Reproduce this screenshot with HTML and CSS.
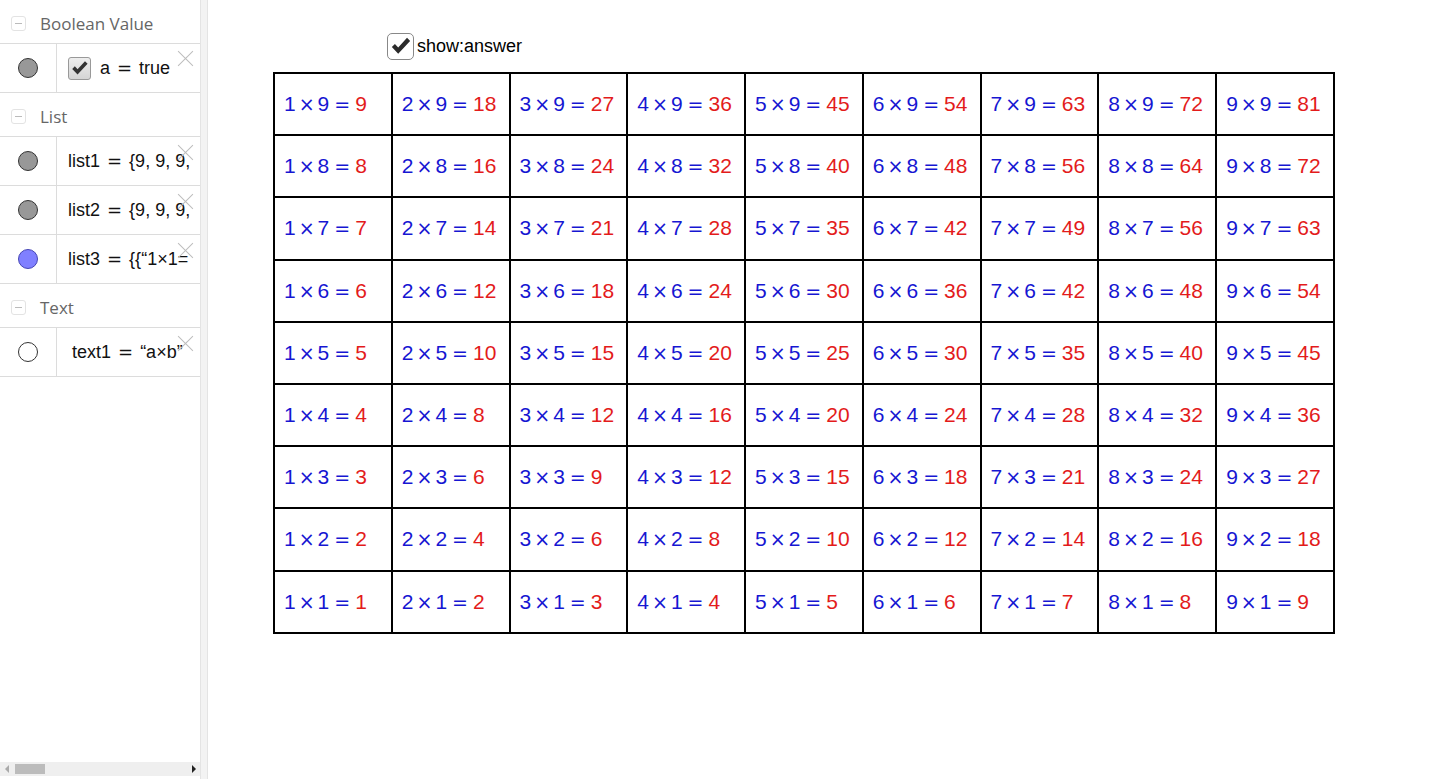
FILE: index.html
```html
<!DOCTYPE html>
<html lang="en">
<head>
  <meta charset="UTF-8">
  <title>Multiplication Table</title>
  <link rel="stylesheet" href="styles.css">
</head>
<body>
  <div id="algebra">
    <div class="group">
      <span class="collapse"></span>
      <span class="group-name">Boolean Value</span>
    </div>
    <div class="item">
      <div class="marble"><span class="dot gray"></span></div>
      <div class="def">
        <span class="check small">
          <svg viewBox="0 0 26 26"><path d="M4 13.5 L7.2 10.3 L10.6 14 L19.8 4 L23 7.2 L10.6 20.5 Z"/></svg>
        </span>
        <span class="math">a <span class="rel">=</span> true</span>
      </div>
      <span class="close"></span>
    </div>
    <div class="group">
      <span class="collapse"></span>
      <span class="group-name">List</span>
    </div>
    <div class="item">
      <div class="marble"><span class="dot gray"></span></div>
      <div class="def"><span class="math">list1 <span class="rel">=</span> {9, 9, 9,</span></div>
      <span class="close top"></span>
    </div>
    <div class="item">
      <div class="marble"><span class="dot gray"></span></div>
      <div class="def"><span class="math">list2 <span class="rel">=</span> {9, 9, 9,</span></div>
      <span class="close top"></span>
    </div>
    <div class="item">
      <div class="marble"><span class="dot blue"></span></div>
      <div class="def"><span class="math">list3 <span class="rel">=</span> {{“1×1=</span></div>
      <span class="close top"></span>
    </div>
    <div class="group">
      <span class="collapse"></span>
      <span class="group-name">Text</span>
    </div>
    <div class="item">
      <div class="marble"><span class="dot white"></span></div>
      <div class="def indent"><span class="math">text1 <span class="rel">=</span> “a×b”</span></div>
      <span class="close top"></span>
    </div>
    <div class="hscroll">
      <span class="arrow left"></span>
      <span class="thumb"></span>
      <span class="arrow right"></span>
    </div>
  </div>
  <div id="splitter"></div>
  <div id="graphics">
    <div class="toggle">
      <span class="check">
        <svg viewBox="0 0 26 26"><path d="M4 13.5 L7.2 10.3 L10.6 14 L19.8 4 L23 7.2 L10.6 20.5 Z"/></svg>
      </span>
      <span>show:answer</span>
    </div>
    <div id="table"></div>
  </div>

  <script>
    let table = document.getElementById('table');
    for (let b = 9; b >= 1; b--) {
      for (let a = 1; a <= 9; a++) {
        let cell = document.createElement('div');
        cell.className = 'cell';
        cell.innerHTML = '<span class="q">' + a + '<span class="op">×</span>' + b +
          '<span class="op eq">=</span></span><span class="ans">' + (a * b) + '</span>';
        table.appendChild(cell);
      }
    }
  </script>
</body>
</html>
```
FILE: styles.css
```css
body {
  margin: 0;
  display: flex;
  height: 100vh;
  overflow: hidden;
  background: #fff;
  font-family: "Open Sans", sans-serif;
}
#algebra {
  position: relative;
  width: 200px;
  flex-shrink: 0;
  overflow: hidden;
}
#splitter {
  width: 6px;
  flex-shrink: 0;
  background: #f3f3f3;
  border-left: 1px solid #e4e4e4;
  border-right: 1px solid #e4e4e4;
}
.group {
  height: 44px;
  box-sizing: border-box;
  padding-top: 3px;
  display: flex;
  align-items: center;
  border-bottom: 1px solid #dcdcdc;
}
.collapse {
  width: 13px;
  height: 13px;
  margin: 0 14px 0 11px;
  border: 1px solid #e3e3e3;
  border-radius: 3px;
  position: relative;
}
.collapse::after {
  content: "";
  position: absolute;
  left: 3px;
  right: 3px;
  top: 6px;
  border-top: 1px solid #bbb;
}
.group-name {
  font-size: 17px;
  color: #666;
}
.item {
  position: relative;
  height: 48px;
  display: flex;
  border-bottom: 1px solid #dcdcdc;
}
.marble {
  width: 56px;
  flex-shrink: 0;
  display: flex;
  align-items: center;
  justify-content: center;
  border-right: 1px solid #dcdcdc;
}
.dot {
  width: 18px;
  height: 18px;
  border-radius: 50%;
  border: 1px solid #333;
}
.dot.gray { background: #989898; }
.dot.blue { background: #8080ff; border-color: #4646b4; }
.dot.white { background: #fff; }
.def {
  display: flex;
  align-items: center;
  padding-left: 11px;
  white-space: nowrap;
}
.def.indent { padding-left: 15px; }
.math {
  font-family: "Liberation Sans", sans-serif;
  font-size: 18px;
  color: #111;
}
.rel {
  margin: 0 2px;
  font-family: "DejaVu Sans", sans-serif;
}
.check {
  width: 27px;
  height: 27px;
  display: inline-flex;
  box-sizing: border-box;
  border: 1px solid #888;
  border-radius: 5px;
  background: #fff;
}
.check svg {
  width: 100%;
  height: 100%;
  fill: #2b2b2b;
}
.check.small {
  width: 23px;
  height: 23px;
  margin-right: 9px;
  border-radius: 3px;
  background: linear-gradient(#eee, #d4d4d4);
  border-color: #999;
}
.check.small svg { fill: #333; }
.close {
  position: absolute;
  right: 6px;
  top: 6px;
  width: 17px;
  height: 17px;
}
.close.top { top: 7px; }
.close::before,
.close::after {
  content: "";
  position: absolute;
  left: -2px;
  right: -2px;
  top: 8px;
  border-top: 1.5px solid #bdbdbd;
  transform: rotate(45deg);
}
.close::after { transform: rotate(-45deg); }
.hscroll {
  position: absolute;
  left: 0;
  right: 0;
  bottom: 3px;
  height: 14px;
  background: #efefef;
}
.thumb {
  position: absolute;
  left: 15px;
  top: 2px;
  width: 30px;
  height: 10px;
  background: #bcbcbc;
}
.arrow {
  position: absolute;
  top: 3px;
  width: 0;
  height: 0;
  border-top: 4px solid transparent;
  border-bottom: 4px solid transparent;
}
.arrow.left { left: 5px; border-right: 4px solid #aaa; }
.arrow.right { right: 4px; border-left: 4px solid #222; }
#graphics {
  flex: 1;
  padding: 33px 0 0 65px;
}
.toggle {
  display: flex;
  align-items: center;
  gap: 3px;
  margin-left: 114px;
  height: 27px;
  font-family: "Liberation Sans", sans-serif;
  font-size: 18px;
  color: #000;
}
#table {
  margin-top: 12px;
  display: grid;
  grid-template-columns: repeat(9, 117.78px);
  grid-template-rows: repeat(9, 62.2px);
  width: max-content;
  border-left: 2px solid #000;
  border-top: 2px solid #000;
}
.cell {
  border-right: 2px solid #000;
  border-bottom: 2px solid #000;
  display: flex;
  align-items: center;
  padding-left: 9px;
  font-family: "Liberation Sans", sans-serif;
  font-size: 21px;
  white-space: nowrap;
}
.q { color: #1616d2; }
.ans { color: #e31b1b; }
.op {
  font-family: "DejaVu Sans", sans-serif;
  font-size: 19px;
  margin: 0 3px;
}
.op.eq { margin: 0 5px; }
```
